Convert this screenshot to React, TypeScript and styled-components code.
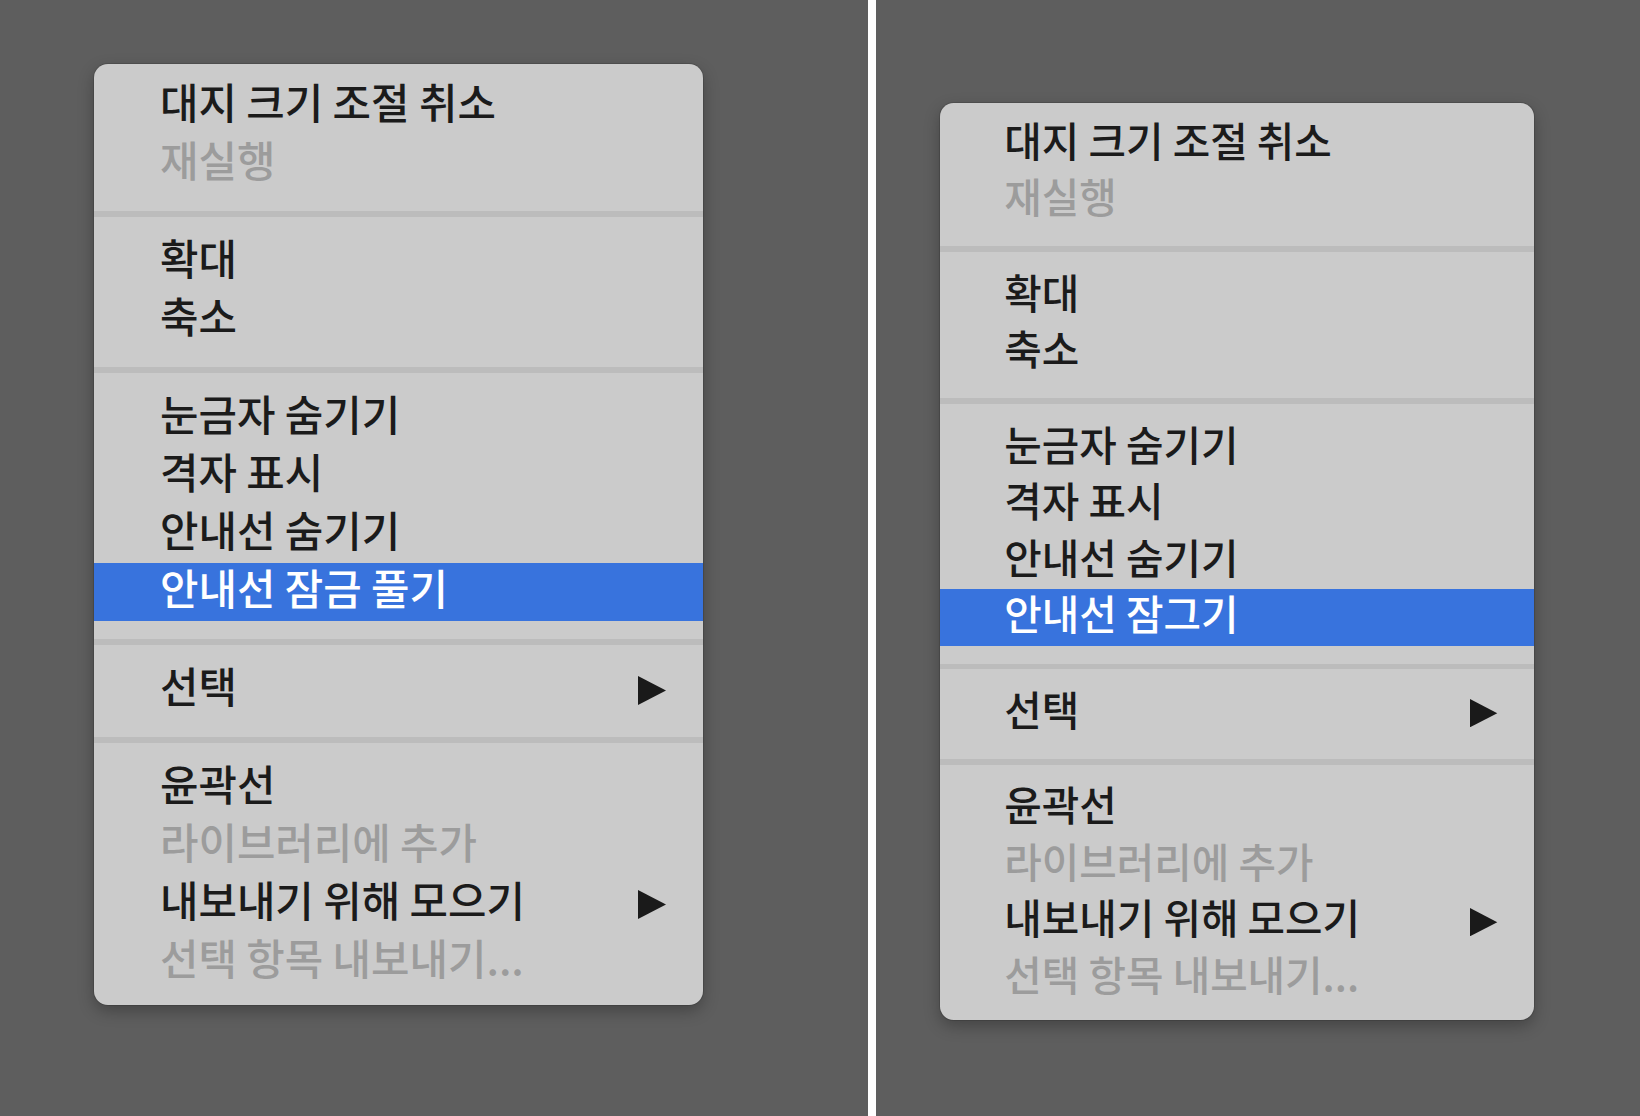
import React from "react";
import styled, { createGlobalStyle } from "styled-components";

const GlobalStyle = createGlobalStyle`
  html, body { margin: 0; padding: 0; }
  body {
    background: #5e5e5e;
    font-family: "Noto Sans CJK KR", "Noto Sans CJK SC", "Noto Sans", sans-serif;
  }
`;

const Page = styled.div`
  display: flex;
  width: 1640px;
  height: 1116px;
  overflow: hidden;
`;

const Panel = styled.div<{ $w?: number; $pt: number; $pl: number }>`
  ${(p) => (p.$w ? `width: ${p.$w}px; flex: none;` : "flex: 1;")}
  box-sizing: border-box;
  padding: ${(p) => p.$pt}px 0 0 ${(p) => p.$pl}px;
  background: #5e5e5e;
`;

const Divider = styled.div`
  width: 8px;
  flex: none;
  background: #ffffff;
`;

const Menu = styled.div<{ $size: number }>`
  font-size: ${(p) => p.$size}px;
  width: 15.225em;
  box-sizing: border-box;
  padding: 0.325em 0 0.35em;
  background: #cbcbcb;
  border-radius: 0.35em;
  box-shadow: 0 0 0 1px rgba(0, 0, 0, 0.12), 0 6px 16px rgba(0, 0, 0, 0.28);
  display: flex;
  flex-direction: column;
`;

const Row = styled.div<{ $disabled?: boolean; $active?: boolean }>`
  height: 1.45em;
  display: flex;
  align-items: center;
  justify-content: space-between;
  padding: 0 0.925em 0 1.65em;
  background: ${(p) => (p.$active ? "#3873dd" : "transparent")};
  color: ${(p) => (p.$active ? "#ffffff" : p.$disabled ? "#9c9c9c" : "#1b1b1b")};
`;

const Label = styled.span`
  font-size: 1.045em;
  font-weight: 500;
  line-height: 1;
  padding-bottom: 0.2em;
  letter-spacing: 0;
  white-space: nowrap;
`;

const Separator = styled.div`
  height: 0.15em;
  margin: 0.45em 0 0.4em;
  background: #bcbcbc;
`;

const Arrow = styled.svg`
  width: 0.7em;
  height: 0.725em;
  display: block;
  flex: none;
`;

type Item = { label: string; disabled?: boolean; active?: boolean; sub?: boolean };

const SubArrow = () => (
  <Arrow viewBox="0 0 28 29">
    <polygon points="0,0 28,14.5 0,29" fill="#1a1a1a" />
  </Arrow>
);

const ContextMenu = ({ size, lockLabel }: { size: number; lockLabel: string }) => {
  const sections: Item[][] = [
    [{ label: "대지 크기 조절 취소" }, { label: "재실행", disabled: true }],
    [{ label: "확대" }, { label: "축소" }],
    [
      { label: "눈금자 숨기기" },
      { label: "격자 표시" },
      { label: "안내선 숨기기" },
      { label: lockLabel, active: true },
    ],
    [{ label: "선택", sub: true }],
    [
      { label: "윤곽선" },
      { label: "라이브러리에 추가", disabled: true },
      { label: "내보내기 위해 모으기", sub: true },
      { label: "선택 항목 내보내기...", disabled: true },
    ],
  ];
  return (
    <Menu $size={size}>
      {sections.map((sec, i) => (
        <React.Fragment key={i}>
          {i > 0 && <Separator />}
          {sec.map((it) => (
            <Row key={it.label} $disabled={it.disabled} $active={it.active}>
              <Label>{it.label}</Label>
              {it.sub && <SubArrow />}
            </Row>
          ))}
        </React.Fragment>
      ))}
    </Menu>
  );
};

export default function App() {
  return (
    <>
      <GlobalStyle />
      <Page>
        <Panel $w={868} $pt={64} $pl={94}>
          <ContextMenu size={40} lockLabel="안내선 잠금 풀기" />
        </Panel>
        <Divider />
        <Panel $pt={103} $pl={64}>
          <ContextMenu size={39} lockLabel="안내선 잠그기" />
        </Panel>
      </Page>
    </>
  );
}
